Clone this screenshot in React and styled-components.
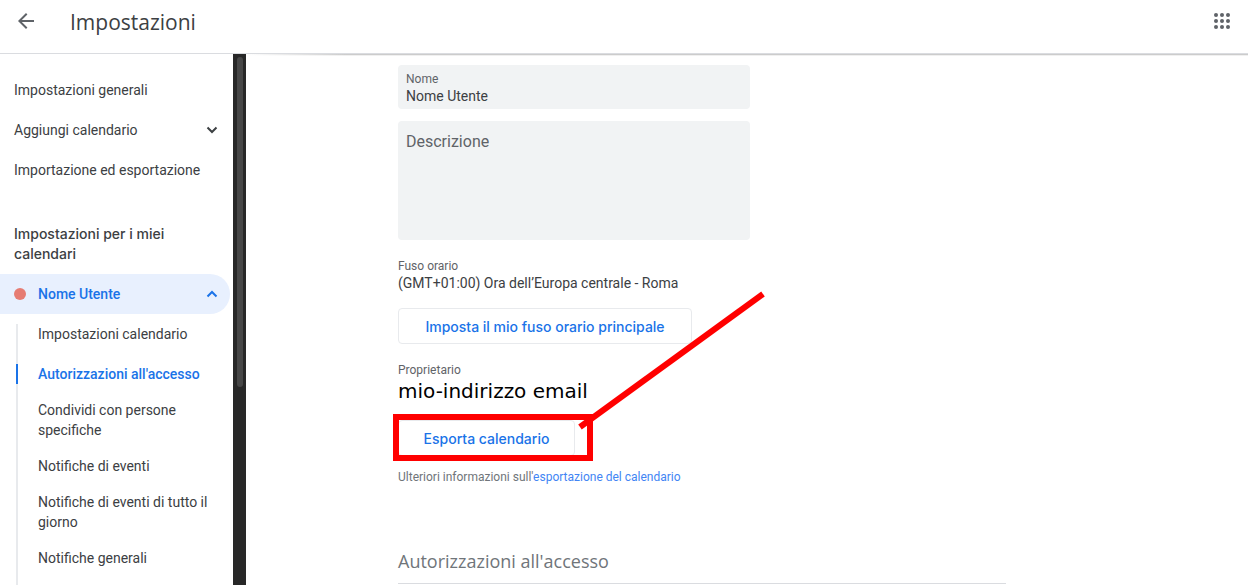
import React, { useState } from 'react'
import styled, { createGlobalStyle } from 'styled-components'

const GlobalStyle = createGlobalStyle`
    * {
        box-sizing: border-box;
    }

    body {
        margin: 0;
        background-color: #fff;
        color: #3c4043;
        font-family: Roboto, sans-serif;
        font-size: 14px;
        line-height: 20px;
    }

    button, input, textarea {
        font-family: inherit;
    }
`

const Page = styled.div`
    display: flex;
    flex-direction: column;
    height: 100vh;
    overflow: hidden;
`

const Header = styled.header`
    display: flex;
    align-items: center;
    flex: none;
    height: 54px;
    padding: 0 14px 12px;
    border-bottom: 1px solid #dadce0;

    h1 {
        flex: 1;
        margin: 0;
        padding: 2px 0 0 32px;
        font-family: "Open Sans", sans-serif;
        font-size: 21px;
        font-weight: 400;
        line-height: 28px;
    }
`

const IconButton = styled.button`
    display: flex;
    padding: 0;
    border: none;
    background: none;
    color: #5f6368;
    cursor: pointer;
`

const Body = styled.div`
    display: flex;
    flex: 1;
    min-height: 0;
`

const Sidebar = styled.aside`
    display: flex;
    flex: none;
    width: 246px;
`

const Nav = styled.nav`
    flex: 1;
    padding: 16px 3px 0 0;
    overflow: hidden;

    h2 {
        margin: 34px 0 10px;
        padding: 0 40px 0 14px;
        font-family: Inter, sans-serif;
        font-size: 14px;
        font-weight: 500;
        line-height: 20px;
    }
`

const NavItem = styled.button`
    display: flex;
    align-items: center;
    width: 100%;
    height: 40px;
    padding: 0 12px 0 14px;
    border: none;
    border-radius: 0 20px 20px 0;
    background-color: ${props => props.$active ? '#e8f0fe' : 'transparent'};
    color: ${props => props.$active ? '#1a73e8' : '#3c4043'};
    font-size: 14px;
    font-weight: ${props => props.$active ? 500 : 400};
    text-align: left;
    cursor: pointer;

    span {
        flex: 1;
    }
`

const Dot = styled.i`
    width: 12px;
    height: 12px;
    margin-right: 12px;
    border-radius: 50%;
    background-color: #e67c73;
`

const SubList = styled.ul`
    display: flex;
    flex-direction: column;
    gap: 16px;
    margin: 10px 16px 0;
    padding: 0 0 40px;
    border-left: 2px solid #e8eaed;
    list-style: none;

    li:first-child {
        margin-bottom: 4px;
    }
`

const SubLink = styled.a`
    display: block;
    margin-left: -2px;
    padding-left: 20px;
    border-left: 2px solid ${props => props.$active ? '#1a73e8' : 'transparent'};
    color: ${props => props.$active ? '#1a73e8' : '#3c4043'};
    font-weight: ${props => props.$active ? 500 : 400};
    text-decoration: none;
`

const Track = styled.div`
    width: 13px;
    padding: 3px 3px 0 4px;
    background-color: #282828;
`

const Thumb = styled.div`
    height: 330px;
    border-radius: 3px;
    background-color: #474747;
`

const Main = styled.main`
    flex: 1;
    min-width: 0;
    padding: 11px 152px 0;
    overflow: hidden;
    background: linear-gradient(to right, #fff, #ccc 100px) 0 0 / 100% 1px no-repeat,
        linear-gradient(to right, #fff, #f0f0f0 100px) 0 1px / 100% 1px no-repeat;
`

const Content = styled.div`
    max-width: 608px;
`

const Field = styled.div`
    display: flex;
    flex-direction: column;
    max-width: 352px;
    margin-bottom: 12px;
    padding: 6px 8px 4px;
    border-radius: 4px;
    background-color: #f1f3f4;

    label {
        color: #5f6368;
        font-size: 12px;
        line-height: 16px;
    }

    input, textarea {
        width: 100%;
        padding: 0;
        border: none;
        outline: none;
        background: none;
        color: #3c4043;
    }

    input {
        height: 18px;
        font-size: 14px;
    }

    textarea {
        display: block;
        height: 109px;
        padding-top: 5px;
        font-size: 16px;
        line-height: 20px;
        resize: none;
    }

    textarea::placeholder {
        color: #5f6368;
    }
`

const Info = styled.div`
    margin-top: 18px;

    h3 {
        margin: 0;
        color: #5f6368;
        font-size: 12px;
        font-weight: 400;
        line-height: 16px;
    }
`

const InfoText = styled.p`
    margin: 0;
    line-height: 18px;
`

const Email = styled.p`
    margin: 0;
    color: #000;
    font-family: "DejaVu Sans", sans-serif;
    font-size: 20px;
    line-height: 26px;
`

const OutlineButton = styled.button`
    display: block;
    min-width: ${props => props.$width};
    height: 36px;
    padding: 0 23px;
    border: 1px solid #e8eaed;
    border-radius: 4px;
    background-color: #fff;
    color: #1a73e8;
    font-family: Inter, sans-serif;
    font-size: 14px;
    font-weight: 500;
    white-space: nowrap;
    cursor: pointer;
`

const Timezone = styled.div`
    margin: 16px 0 18px;
`

const Export = styled.div`
    position: relative;
    width: fit-content;
    margin: 16px 0 12px;
`

const Highlight = styled.div`
    position: absolute;
    top: -6px;
    left: -5px;
    width: 200px;
    height: 47px;
    border: 6px solid #f00;
    pointer-events: none;
`

const Pointer = styled.svg`
    position: absolute;
    top: -132px;
    left: 172px;
    pointer-events: none;
`

const Help = styled.p`
    margin: 0;
    color: #70757a;
    font-size: 12px;
    line-height: 18px;

    a {
        color: #4285f4;
        text-decoration: none;
    }
`

const SectionTitle = styled.h2`
    margin: 63px 0 0;
    padding-bottom: 10px;
    border-bottom: 1px solid #dadce0;
    color: #70757a;
    font-family: "Open Sans", sans-serif;
    font-size: 18px;
    font-weight: 400;
    line-height: 24px;
`

const subItems = [
    'Impostazioni calendario',
    "Autorizzazioni all'accesso",
    'Condividi con persone specifiche',
    'Notifiche di eventi',
    'Notifiche di eventi di tutto il giorno',
    'Notifiche generali',
]

const Chevron = ({ up }) => (
    <svg width='12' height='8' viewBox='0 0 12 8' fill='none' stroke='currentColor' strokeWidth='2'>
        <path d={up ? 'M1.5 6.5L6 2l4.5 4.5' : 'M1.5 1.5L6 6l4.5-4.5'} />
    </svg>
)

export default function App() {

    const [name, setName] = useState('Nome Utente')
    const [description, setDescription] = useState('')

    return (
        <Page>
            <GlobalStyle />
            <Header>
                <IconButton aria-label='Indietro'>
                    <svg width='24' height='24' viewBox='0 0 24 24' fill='currentColor'>
                        <path d='M20 11H7.83l5.59-5.59L12 4l-8 8 8 8 1.41-1.41L7.83 13H20v-2z' />
                    </svg>
                </IconButton>
                <h1>Impostazioni</h1>
                <IconButton aria-label='App Google'>
                    <svg width='24' height='24' viewBox='0 0 24 24' fill='currentColor'>
                        {[6, 12, 18].map(y => [6, 12, 18].map(x => (
                            <circle key={`${x}-${y}`} cx={x} cy={y} r='2' />
                        )))}
                    </svg>
                </IconButton>
            </Header>

            <Body>
                <Sidebar>
                    <Nav>
                        <NavItem><span>Impostazioni generali</span></NavItem>
                        <NavItem><span>Aggiungi calendario</span><Chevron /></NavItem>
                        <NavItem><span>Importazione ed esportazione</span></NavItem>
                        <h2>Impostazioni per i miei calendari</h2>
                        <NavItem $active>
                            <Dot />
                            <span>{name}</span>
                            <Chevron up />
                        </NavItem>
                        <SubList>
                            {subItems.map((item, i) => (
                                <li key={item}>
                                    <SubLink href='#' $active={i === 1}>{item}</SubLink>
                                </li>
                            ))}
                        </SubList>
                    </Nav>
                    <Track><Thumb /></Track>
                </Sidebar>

                <Main>
                    <Content>
                        <Field>
                            <label htmlFor='name'>Nome</label>
                            <input
                                id='name'
                                type='text'
                                value={name}
                                onChange={event => setName(event.target.value)}
                            />
                        </Field>
                        <Field>
                            <textarea
                                aria-label='Descrizione'
                                placeholder='Descrizione'
                                value={description}
                                onChange={event => setDescription(event.target.value)}
                            />
                        </Field>

                        <Info>
                            <h3>Fuso orario</h3>
                            <InfoText>(GMT+01:00) Ora dell’Europa centrale - Roma</InfoText>
                        </Info>
                        <Timezone>
                            <OutlineButton $width='294px'>Imposta il mio fuso orario principale</OutlineButton>
                        </Timezone>

                        <Info>
                            <h3>Proprietario</h3>
                            <Email>mio-indirizzo email</Email>
                        </Info>
                        <Export>
                            <OutlineButton $width='177px'>Esporta calendario</OutlineButton>
                            <Highlight />
                            <Pointer width='200' height='150' viewBox='0 0 200 150'>
                                <line x1='10' y1='139' x2='193' y2='6' stroke='#f00' strokeWidth='6' />
                            </Pointer>
                        </Export>
                        <Help>
                            Ulteriori informazioni sull'<a href='#'>esportazione del calendario</a>
                        </Help>

                        <SectionTitle>Autorizzazioni all'accesso</SectionTitle>
                    </Content>
                </Main>
            </Body>
        </Page>
    )
}
